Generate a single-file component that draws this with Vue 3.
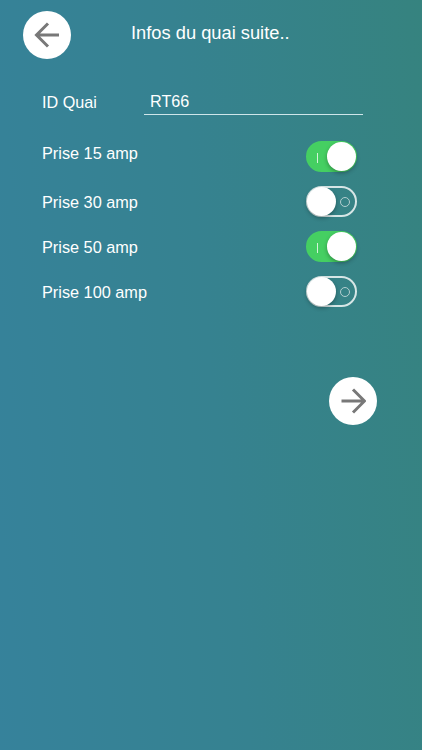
<script setup>
const plugs = [
  { label: "Prise 15 amp", on: true },
  { label: "Prise 30 amp", on: false },
  { label: "Prise 50 amp", on: true },
  { label: "Prise 100 amp", on: false },
];
</script>

<template>
  <div class="page">
    <div class="header">
      <button class="round">
        <svg width="26" height="26" viewBox="0 0 26 26" fill="none">
          <path d="M25 13H2.500M14 1.500L2.500 13L14 24.500" />
        </svg>
      </button>
      <h1 class="title">Infos du quai suite..</h1>
    </div>

    <div class="id-row">
      <span class="id-label">ID Quai</span>
      <div class="id-value">RT66</div>
    </div>

    <div class="plugs">
      <div v-for="plug in plugs" :key="plug.label" class="plug">
        <span class="plug__label">{{ plug.label }}</span>
        <div class="switch" :class="{ 'switch--on': plug.on }">
          <span v-if="plug.on" class="switch__bar"></span>
          <span v-else class="switch__ring"></span>
          <span class="switch__knob"></span>
        </div>
      </div>
    </div>

    <div class="next-row">
      <button class="round">
        <svg width="26" height="26" viewBox="0 0 26 26" fill="none">
          <path d="M1.500 13H24.500M13 1.500L24.500 13L13 24.500" />
        </svg>
      </button>
    </div>
  </div>
</template>

<style scoped>
.page {
  width: 422px;
  height: 750px;
  box-sizing: border-box;
  padding: 11px 0 0 23px;
  overflow: hidden;
  background: linear-gradient(84deg, #36829b 0%, #368290 50%, #36837f 100%);
  color: #fff;
  font-family: "Liberation Sans", Arial, sans-serif;
}
.header {
  display: flex;
  align-items: flex-start;
}
.round {
  width: 48px;
  height: 48px;
  padding: 0;
  border: none;
  border-radius: 50%;
  background: #fff;
  display: flex;
  align-items: center;
  justify-content: center;
}
.round svg path {
  stroke: #787878;
  stroke-width: 3;
}
.title {
  margin: 11px 0 0 60px;
  font-size: 18.3px;
  line-height: 22px;
  font-weight: normal;
}
.id-row {
  display: flex;
  align-items: flex-end;
  margin: 29px 0 0 19px;
  font-size: 16.2px;
}
.id-label {
  width: 102px;
  line-height: 24px;
  padding-bottom: 1px;
}
.id-value {
  width: 213px;
  padding: 1px 0 1px 6px;
  line-height: 24px;
  border-bottom: 1px solid #cfe6ea;
}
.plugs {
  display: flex;
  flex-direction: column;
  gap: 14px;
  margin: 26px 0 0 19px;
  width: 315px;
}
.plug {
  display: flex;
  align-items: center;
  justify-content: space-between;
  font-size: 16.3px;
  height: 31px;
}
.plug:first-child .plug__label {
  margin-bottom: 8px;
}
.plug__label {
  line-height: 20px;
}
.switch {
  position: relative;
  width: 51px;
  height: 31px;
  box-sizing: border-box;
  border: 2px solid #d6e6e6;
  border-radius: 16px;
}
.switch--on {
  border-color: #45cf62;
  background: #45cf62;
}
.switch__knob {
  position: absolute;
  top: -1px;
  left: -1px;
  width: 29px;
  height: 29px;
  border-radius: 50%;
  background: #fff;
  box-shadow: 0 2px 4px rgba(0, 0, 0, 0.3);
}
.switch--on .switch__knob {
  left: 19px;
}
.switch__bar {
  position: absolute;
  left: 9px;
  top: 10px;
  width: 1px;
  height: 10px;
  background: #d5f3db;
}
.switch__ring {
  position: absolute;
  right: 5px;
  top: 9px;
  width: 10px;
  height: 10px;
  box-sizing: border-box;
  border: 1px solid #b4cfd0;
  border-radius: 50%;
}
.next-row {
  margin: 70px 0 0 306px;
}
</style>
